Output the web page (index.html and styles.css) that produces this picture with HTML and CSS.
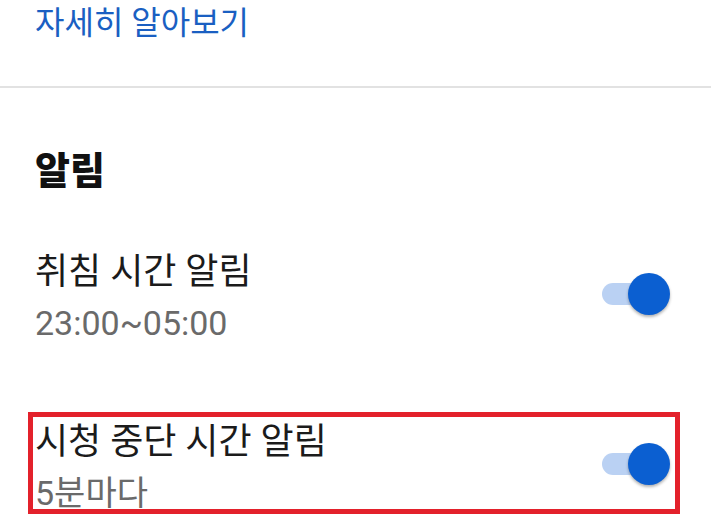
FILE: index.html
```html
<!DOCTYPE html>
<html lang="ko">
<head>
    <meta charset="UTF-8">
    <meta name="viewport" content="width=device-width, initial-scale=1.0">
    <title>알림 설정</title>
    <link rel="stylesheet" href="styles.css">
</head>
<body>
    <div id="wrap">
        <a class="more" href="#">자세히 알아보기</a>
        <div class="divider"></div>

        <h2 class="section-title">알림</h2>

        <div class="setting">
            <div class="setting-text">
                <div class="setting-name">취침 시간 알림</div>
                <div class="setting-sub">23:00~05:00</div>
            </div>
            <div class="toggle on"><span class="track"></span><span class="thumb"></span></div>
        </div>

        <div class="setting marked">
            <div class="setting-text">
                <div class="setting-name">시청 중단 시간 알림</div>
                <div class="setting-sub">5분마다</div>
            </div>
            <div class="toggle on"><span class="track"></span><span class="thumb"></span></div>
        </div>
    </div>
</body>
</html>
```

FILE: styles.css
```css
*{margin: 0; padding: 0; box-sizing: border-box;}
body {
    width: 100%;
    height: 100vh;
    background: #fff;
    font-family: Roboto, "Noto Sans CJK KR", sans-serif;
    overflow: hidden;
}
#wrap {
    width: 100%;
}
.more {
    display: block;
    padding-left: 35px;
    font-size: 32px;
    line-height: 46px;
    color: #1a5fc2;
    text-decoration: none;
}
.divider {
    height: 2px;
    margin: 40px 9px 0 0;
    background: #e2e2e2;
}
.section-title {
    margin-top: 59px;
    padding-left: 35px;
    font-size: 38px;
    font-weight: 900;
    line-height: 48px;
    color: #111;
}
.setting {
    display: flex;
    justify-content: space-between;
    align-items: flex-start;
    margin: 52px 45px 0 33px;
    padding: 2px 5px 0 2px;
}
.setting.marked {
    height: 92px;
    margin-top: 66px;
    outline: 5px solid #e3212b;
}
.setting-name {
    font-size: 36px;
    line-height: 46px;
    color: #1b1b1b;
}
.setting-sub {
    font-size: 34px;
    line-height: 56px;
    color: #6a6a6a;
}
/* 스위치 */
.toggle {
    display: flex;
    align-items: center;
    width: 68px;
    height: 42px;
    margin-top: 24px;
}
.toggle .track {
    width: 50px;
    height: 22px;
    margin-right: -24px;
    border-radius: 11px;
    background: #bad1f3;
}
.toggle .thumb {
    width: 42px;
    height: 42px;
    border-radius: 50%;
    background: #0b5fd1;
    box-shadow: 0 2px 3px rgba(0, 0, 0, 0.3);
}
```
